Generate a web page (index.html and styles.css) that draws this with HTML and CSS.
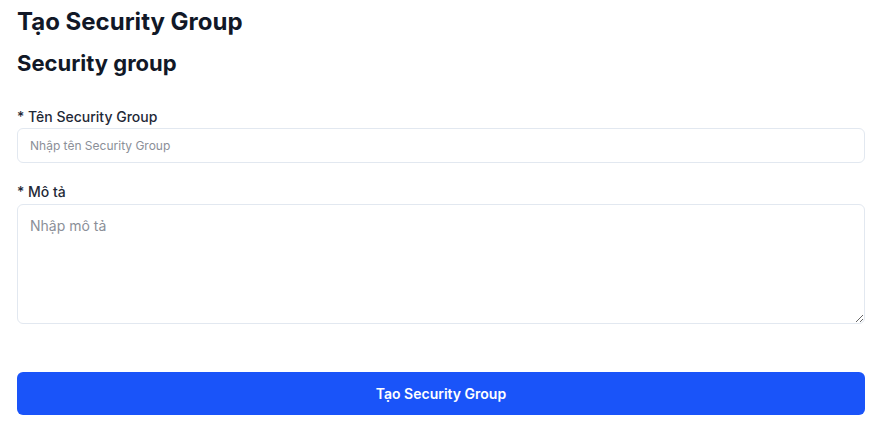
FILE: index.html
```html
<!DOCTYPE html>
<html>

<head>
  <link rel="stylesheet" href="styles.css">
</head>

<body>
  <div class="page">
    <h1 class="title">Tạo Security Group</h1>
    <h2 class="subtitle">Security group</h2>

    <form class="form">
      <div class="field">
        <label for="sgName" class="label">* Tên Security Group</label>
        <input type="text" id="sgName" class="input" placeholder="Nhập tên Security Group">
      </div>

      <div class="field">
        <label for="sgDesc" class="label">* Mô tả</label>
        <textarea id="sgDesc" class="textarea" placeholder="Nhập mô tả"></textarea>
      </div>

      <button type="button" class="button">Tạo Security Group</button>
    </form>
  </div>
</body>

</html>
```

FILE: styles.css
```css
body {
  margin: 0;
  background-color: #ffffff;
  font-family: Inter, "Noto Sans", sans-serif;
  color: #111827;
}

.page {
  width: 848px;
  padding: 6px 0 0 17px;
}

.title {
  margin: 0;
  font-size: 24px;
  line-height: 32px;
  font-weight: 700;
}

.subtitle {
  margin: 10px 0 0;
  font-size: 22px;
  line-height: 30px;
  font-weight: 700;
}

.form {
  display: flex;
  flex-direction: column;
  margin-top: 29px;
}

.field {
  display: flex;
  flex-direction: column;
  margin-bottom: 19px;
}

.label {
  font-size: 14px;
  line-height: 20px;
  font-weight: 500;
  color: #1f2937;
  margin-bottom: 1px;
}

.input {
  height: 35px;
  box-sizing: border-box;
  border: 1px solid #e2e8f0;
  border-radius: 6px;
  padding: 0 12px;
  font-family: inherit;
  font-size: 12px;
  color: #111827;
}

.textarea {
  height: 120px;
  margin-top: 1px;
  box-sizing: border-box;
  border: 1px solid #e2e8f0;
  border-radius: 6px;
  padding: 11px 12px;
  font-family: inherit;
  font-size: 14px;
  line-height: 20px;
  color: #111827;
}

.input::placeholder,
.textarea::placeholder {
  color: #8b8f98;
}

.button {
  margin-top: 29px;
  height: 43px;
  border: none;
  border-radius: 6px;
  background-color: #1a54f9;
  color: white;
  font-family: inherit;
  font-size: 14px;
  font-weight: 600;
  cursor: pointer;
}

.button:hover {
  background-color: #1546d6;
}
```
